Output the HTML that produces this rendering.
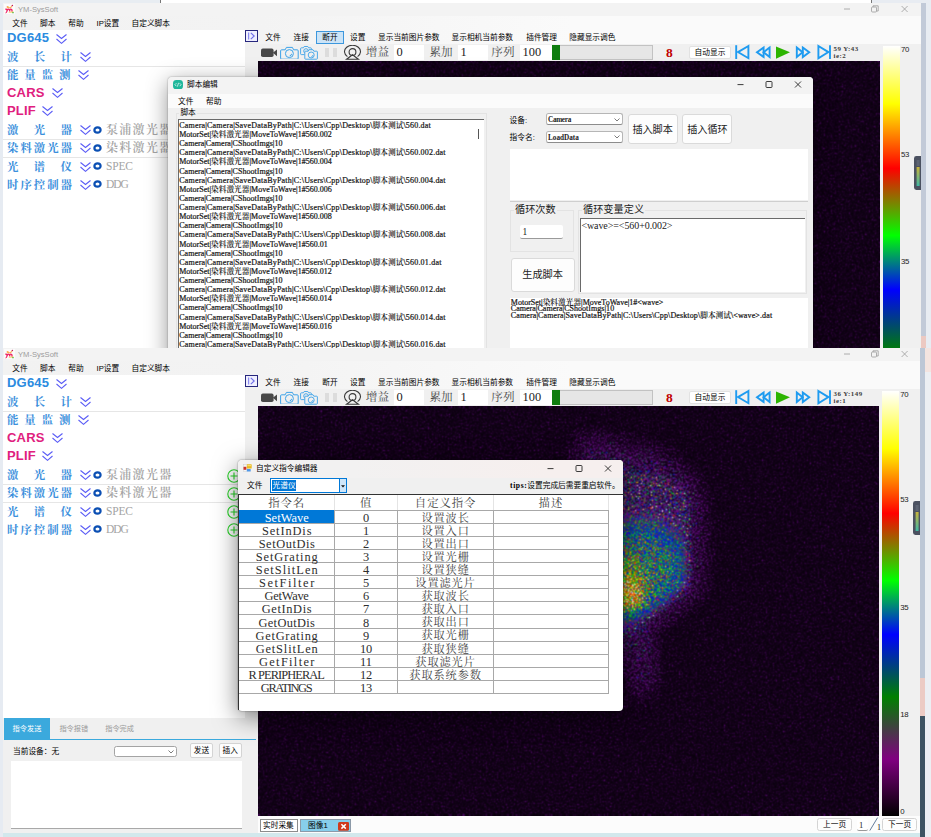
<!DOCTYPE html><html lang="zh"><head><meta charset="utf-8"><title>YM-SysSoft</title><style>
*{box-sizing:border-box;margin:0;padding:0}
html,body{width:931px;height:837px;overflow:hidden;background:#fff}
body{position:relative;font-family:"Liberation Sans","Noto Sans CJK SC",sans-serif;font-size:7.7px;color:#000;line-height:1}
.a{position:absolute}
.t{position:absolute;white-space:nowrap;line-height:10px;height:10px}
.ss{font-family:"Liberation Serif","Noto Serif CJK SC",serif}
.mono{font-family:"Liberation Serif","Noto Serif CJK SC",serif}
.win{position:absolute;left:0;top:0;width:931px;overflow:hidden}
.lbl{position:absolute;left:7px;height:12px;line-height:12px;font-size:12px;font-weight:700;white-space:nowrap}
.cj{font-family:"Liberation Serif","Noto Serif CJK SC",serif;color:#3b8fdc;width:65px;font-size:11.4px;font-weight:700;margin-top:.9px;text-align:justify;text-align-last:justify}
.en{font-family:"Liberation Sans",sans-serif;font-size:13px;letter-spacing:.2px}
.gray{position:absolute;left:106px;height:12px;line-height:12px;font-size:12px;color:#a4a4a4;font-weight:600;white-space:nowrap;font-family:"Liberation Serif","Noto Serif CJK SC",serif}
.sep{position:absolute;left:3px;width:242px;height:1px;background:#e6e6e6}
.btn{position:absolute;background:#fdfdfd;border:1px solid #d4d4d4;border-radius:2px;text-align:center;white-space:nowrap}
.inp{position:absolute;background:#fff}
.cb{position:absolute;background:#fff;border:1px solid #b6b6b6;border-bottom-color:#8c8c8c;border-radius:2.5px}

.scr,.scr2{font-size:8px;color:#161616;white-space:nowrap;font-weight:400;-webkit-text-stroke:.22px #161616}
.scr div{height:9.125px;line-height:9.125px}
.scr2 div{height:6.8px;line-height:6.8px}
.scr i,.scr2 i{line-height:0;font-style:normal;letter-spacing:0;font-weight:600;font-size:7.7px;-webkit-text-stroke:0;font-family:"Liberation Serif","Noto Serif CJK SC",serif}
.l1{letter-spacing:.2px}.l2{letter-spacing:0}.l3{letter-spacing:.03px}
.th{font-size:11.4px;height:13px;line-height:13px;text-align:center;color:#444;letter-spacing:.9px}
.td{font-size:12.4px;height:12.4px;line-height:12.4px;text-align:center;color:#2e2e2e}
.td2{font-size:11.2px;height:12.4px;line-height:12.4px;text-align:center;color:#444;letter-spacing:.9px}
</style></head><body>
<svg width="0" height="0" style="position:absolute"><defs>
<filter id="cm11" x="0" y="0" width="100%" height="100%" color-interpolation-filters="sRGB">
<feTurbulence type="fractalNoise" baseFrequency="0.71 0.63" numOctaves="3" seed="11" result="t"/>
<feColorMatrix in="t" type="matrix" values="1.3 0 0 0 -0.15  1.3 0 0 0 -0.15  1.3 0 0 0 -0.15  0 0 0 0 1" result="n"/>
<feComposite in="n" in2="n" operator="arithmetic" k1="1" k2="0" k3="0" k4="0" result="n2"/>
<feComposite in="n2" in2="n2" operator="arithmetic" k1="1" k2="0" k3="0" k4="0" result="n4"/>
<feComponentTransfer in="SourceGraphic" result="B"><feFuncR type="table" tableValues="0 0 0 0 0 0 0 0 0 0 0 0 0 0 0 0.008 0.021 0.034 0.048 0.061 0.076 0.09 0.105 0.12 0.135 0.151 0.166 0.182 0.198 0.214 0.23 0.247 0.263 0.28 0.297 0.314 0.331 0.348 0.365 0.383 0.4"/><feFuncG type="table" tableValues="0 0 0 0 0 0 0 0 0 0 0 0 0 0 0 0.008 0.021 0.034 0.048 0.061 0.076 0.09 0.105 0.12 0.135 0.151 0.166 0.182 0.198 0.214 0.23 0.247 0.263 0.28 0.297 0.314 0.331 0.348 0.365 0.383 0.4"/><feFuncB type="table" tableValues="0 0 0 0 0 0 0 0 0 0 0 0 0 0 0 0.008 0.021 0.034 0.048 0.061 0.076 0.09 0.105 0.12 0.135 0.151 0.166 0.182 0.198 0.214 0.23 0.247 0.263 0.28 0.297 0.314 0.331 0.348 0.365 0.383 0.4"/></feComponentTransfer>
<feComponentTransfer in="SourceGraphic" result="C"><feFuncR type="table" tableValues="0 0 0 0 0 0 0 0.007 0.047 0.12 0.219 0.336 0.46 0.577 0.674 0.734 0.759 0.782 0.805 0.827 0.849 0.869 0.89 0.91 0.93 0.949 0.967 0.986 1 1 1 1 1 1 1 1 1 1 1 1 1"/><feFuncG type="table" tableValues="0 0 0 0 0 0 0 0.007 0.047 0.12 0.219 0.336 0.46 0.577 0.674 0.734 0.759 0.782 0.805 0.827 0.849 0.869 0.89 0.91 0.93 0.949 0.967 0.986 1 1 1 1 1 1 1 1 1 1 1 1 1"/><feFuncB type="table" tableValues="0 0 0 0 0 0 0 0.007 0.047 0.12 0.219 0.336 0.46 0.577 0.674 0.734 0.759 0.782 0.805 0.827 0.849 0.869 0.89 0.91 0.93 0.949 0.967 0.986 1 1 1 1 1 1 1 1 1 1 1 1 1"/></feComponentTransfer>
<feComponentTransfer in="SourceGraphic" result="D"><feFuncR type="table" tableValues="0 0.081 0.162 0.243 0.323 0.388 0.388 0.383 0.354 0.306 0.246 0.181 0.117 0.061 0.02 0.001 0 0 0 0 0 0 0 0 0 0 0 0 0 0 0 0 0 0 0 0 0 0 0 0 0"/><feFuncG type="table" tableValues="0 0.081 0.162 0.243 0.323 0.388 0.388 0.383 0.354 0.306 0.246 0.181 0.117 0.061 0.02 0.001 0 0 0 0 0 0 0 0 0 0 0 0 0 0 0 0 0 0 0 0 0 0 0 0 0"/><feFuncB type="table" tableValues="0 0.081 0.162 0.243 0.323 0.388 0.388 0.383 0.354 0.306 0.246 0.181 0.117 0.061 0.02 0.001 0 0 0 0 0 0 0 0 0 0 0 0 0 0 0 0 0 0 0 0 0 0 0 0 0"/></feComponentTransfer>
<feComposite in="C" in2="n" operator="arithmetic" k1="1" k2="0" k3="0" k4="0" result="cn"/>
<feComposite in="D" in2="n4" operator="arithmetic" k1="4.6" k2="0" k3="0" k4="0" result="dn"/>
<feComposite in="cn" in2="B" operator="arithmetic" k1="0" k2="1" k3="1" k4="0" result="a0"/>
<feComposite in="a0" in2="dn" operator="arithmetic" k1="0" k2="1" k3="1" k4="0" result="a"/>
<feComposite in="a" in2="n4" operator="arithmetic" k1="0" k2="1" k3="0.13" k4="0.011" result="i"/>
<feComponentTransfer in="i" result="c">
<feFuncR type="table" tableValues="0 .46 .1 0 0 1 1 1"/>
<feFuncG type="table" tableValues="0 .04 .38 0 1 0 1 1"/>
<feFuncB type="table" tableValues="0 .6 .2 1 0 0 0 1"/>
</feComponentTransfer>
<feConvolveMatrix in="c" order="3" kernelMatrix="0.0484 0.1232 0.0484 0.1232 0.3136 0.1232 0.0484 0.1232 0.0484" divisor="1" edgeMode="duplicate" preserveAlpha="true"/>
</filter>
<filter id="cm4" x="0" y="0" width="100%" height="100%" color-interpolation-filters="sRGB">
<feTurbulence type="fractalNoise" baseFrequency="0.71 0.63" numOctaves="3" seed="4" result="t"/>
<feColorMatrix in="t" type="matrix" values="1.3 0 0 0 -0.15  1.3 0 0 0 -0.15  1.3 0 0 0 -0.15  0 0 0 0 1" result="n"/>
<feComposite in="n" in2="n" operator="arithmetic" k1="1" k2="0" k3="0" k4="0" result="n2"/>
<feComposite in="n2" in2="n2" operator="arithmetic" k1="1" k2="0" k3="0" k4="0" result="n4"/>
<feComponentTransfer in="SourceGraphic" result="B"><feFuncR type="table" tableValues="0 0 0 0 0 0 0 0 0 0 0 0 0 0 0 0.008 0.021 0.034 0.048 0.061 0.076 0.09 0.105 0.12 0.135 0.151 0.166 0.182 0.198 0.214 0.23 0.247 0.263 0.28 0.297 0.314 0.331 0.348 0.365 0.383 0.4"/><feFuncG type="table" tableValues="0 0 0 0 0 0 0 0 0 0 0 0 0 0 0 0.008 0.021 0.034 0.048 0.061 0.076 0.09 0.105 0.12 0.135 0.151 0.166 0.182 0.198 0.214 0.23 0.247 0.263 0.28 0.297 0.314 0.331 0.348 0.365 0.383 0.4"/><feFuncB type="table" tableValues="0 0 0 0 0 0 0 0 0 0 0 0 0 0 0 0.008 0.021 0.034 0.048 0.061 0.076 0.09 0.105 0.12 0.135 0.151 0.166 0.182 0.198 0.214 0.23 0.247 0.263 0.28 0.297 0.314 0.331 0.348 0.365 0.383 0.4"/></feComponentTransfer>
<feComponentTransfer in="SourceGraphic" result="C"><feFuncR type="table" tableValues="0 0 0 0 0 0 0 0.007 0.047 0.12 0.219 0.336 0.46 0.577 0.674 0.734 0.759 0.782 0.805 0.827 0.849 0.869 0.89 0.91 0.93 0.949 0.967 0.986 1 1 1 1 1 1 1 1 1 1 1 1 1"/><feFuncG type="table" tableValues="0 0 0 0 0 0 0 0.007 0.047 0.12 0.219 0.336 0.46 0.577 0.674 0.734 0.759 0.782 0.805 0.827 0.849 0.869 0.89 0.91 0.93 0.949 0.967 0.986 1 1 1 1 1 1 1 1 1 1 1 1 1"/><feFuncB type="table" tableValues="0 0 0 0 0 0 0 0.007 0.047 0.12 0.219 0.336 0.46 0.577 0.674 0.734 0.759 0.782 0.805 0.827 0.849 0.869 0.89 0.91 0.93 0.949 0.967 0.986 1 1 1 1 1 1 1 1 1 1 1 1 1"/></feComponentTransfer>
<feComponentTransfer in="SourceGraphic" result="D"><feFuncR type="table" tableValues="0 0.081 0.162 0.243 0.323 0.388 0.388 0.383 0.354 0.306 0.246 0.181 0.117 0.061 0.02 0.001 0 0 0 0 0 0 0 0 0 0 0 0 0 0 0 0 0 0 0 0 0 0 0 0 0"/><feFuncG type="table" tableValues="0 0.081 0.162 0.243 0.323 0.388 0.388 0.383 0.354 0.306 0.246 0.181 0.117 0.061 0.02 0.001 0 0 0 0 0 0 0 0 0 0 0 0 0 0 0 0 0 0 0 0 0 0 0 0 0"/><feFuncB type="table" tableValues="0 0.081 0.162 0.243 0.323 0.388 0.388 0.383 0.354 0.306 0.246 0.181 0.117 0.061 0.02 0.001 0 0 0 0 0 0 0 0 0 0 0 0 0 0 0 0 0 0 0 0 0 0 0 0 0"/></feComponentTransfer>
<feComposite in="C" in2="n" operator="arithmetic" k1="1" k2="0" k3="0" k4="0" result="cn"/>
<feComposite in="D" in2="n4" operator="arithmetic" k1="4.6" k2="0" k3="0" k4="0" result="dn"/>
<feComposite in="cn" in2="B" operator="arithmetic" k1="0" k2="1" k3="1" k4="0" result="a0"/>
<feComposite in="a0" in2="dn" operator="arithmetic" k1="0" k2="1" k3="1" k4="0" result="a"/>
<feComposite in="a" in2="n4" operator="arithmetic" k1="0" k2="1" k3="0.13" k4="0.011" result="i"/>
<feComponentTransfer in="i" result="c">
<feFuncR type="table" tableValues="0 .46 .1 0 0 1 1 1"/>
<feFuncG type="table" tableValues="0 .04 .38 0 1 0 1 1"/>
<feFuncB type="table" tableValues="0 .6 .2 1 0 0 0 1"/>
</feComponentTransfer>
<feConvolveMatrix in="c" order="3" kernelMatrix="0.0484 0.1232 0.0484 0.1232 0.3136 0.1232 0.0484 0.1232 0.0484" divisor="1" edgeMode="duplicate" preserveAlpha="true"/>
</filter>
<filter id="b12" x="-60%" y="-60%" width="220%" height="220%"><feGaussianBlur stdDeviation="11"/></filter>
<filter id="b7" x="-60%" y="-60%" width="220%" height="220%"><feGaussianBlur stdDeviation="7"/></filter>
<filter id="b5" x="-60%" y="-60%" width="220%" height="220%"><feGaussianBlur stdDeviation="4.5"/></filter>
<filter id="b3" x="-30%" y="-30%" width="160%" height="160%"><feGaussianBlur stdDeviation="3"/></filter>
</defs></svg>
<div class="a" style="left:0;top:0;width:931px;height:837px;background:#e8ecf2"></div>
<div class="a" style="left:0;top:0;width:160px;height:3px;background:#e8edf2"></div>
<div class="a" style="left:160px;top:0;width:712px;height:3px;background:#fff;border-left:1px solid #777;border-right:1px solid #777"></div>
<div class="win" style="top:0;height:348px">
<div class="a" style="left:921px;top:3px;width:5px;height:345px;background:#c2cad8"></div>
<div class="a" style="left:921px;top:336px;width:5px;height:12px;background:#ecc9c2"></div>
<div class="a" style="left:3px;top:3px;width:918px;height:345px;background:#f0f0f0"></div>
<div class="a" style="left:3px;top:3px;width:918px;height:13px;background:#f3f3f3"></div>
<div class="a" style="left:3px;top:16px;width:918px;height:28px;background:linear-gradient(to right,#f2f2f2 0,#f3f3f3 28%,#fafafa 62%)"></div>
<svg class="a" style="left:4px;top:4px" width="11" height="10.2" viewBox="0 0 11 10.2"><rect width="11" height="10.2" fill="#fbfbfb"/><path d="M2.6 2.4C3.6 1.6 4.4 2.4 5.2 3.2C6.2 3.6 7 2.6 7.6 1.6L8.2 2.4C7.6 3.6 7 4.2 6 4.2L3 4.2Z" fill="#f9a23c" opacity=".85"/><path d="M1 4.9C2 4.1 2.9 4.3 3.3 5C3.9 4.2 5 4.2 5.5 5C6.1 4.3 7.4 4.2 8.1 5.1C8.7 5.9 8.6 6.8 8.9 7.6L7.6 7.7C7.3 6.9 7.4 6 6.8 5.7C6.3 6 6.4 6.9 6.3 7.6L5.1 7.6C5.1 6.9 5.1 6.1 4.6 5.8C4 6.2 3.6 7.4 2.9 8.6C2.5 9.2 1.6 9.4 1.1 8.9C1.9 8.6 2.3 7.6 2.5 6.4C2.2 5.8 1.6 5.5 1 5.6Z" fill="#ee2466"/><circle cx="8.4" cy="1.5" r=".75" fill="#c2185b"/><path d="M4.6 7.9L9.4 7.5L9.6 8.4L4.8 8.6Z" fill="#f7c531"/><rect x="8" y="8.3" width="1.9" height=".9" fill="#4cb648"/></svg>
<div class="t" style="left:18px;top:5px;font-size:7.6px;color:#9c9c9c;font-family:'Liberation Sans',sans-serif">YM-SysSoft</div>
<div class="t" style="left:12.3px;top:18.6px">文件</div>
<div class="t" style="left:40.0px;top:18.6px">脚本</div>
<div class="t" style="left:68.3px;top:18.6px">帮助</div>
<div class="t" style="left:96.6px;top:18.6px">IP设置</div>
<div class="t" style="left:131.5px;top:18.6px">自定义脚本</div>
<svg class="a" style="left:843px;top:4px" width="70" height="10" viewBox="0 0 70 10"><g fill="none" stroke="#9a9a9a" stroke-width="0.8"><path d="M1 5H7"/><rect x="28.5" y="3" width="5" height="5" rx="1"/><path d="M30 3V1.8h5.2V7H33.6"/><path d="M58.6 2L64.6 8M64.6 2L58.6 8"/></g></svg>
<div class="a" style="left:3px;top:30px;width:242px;height:320px;background:#fff"></div>
<div class="lbl en" style="top:32.0px;color:#2b8be0;top:31.0px;height:14px;line-height:14px;">DG645</div>
<svg class="a" style="left:56px;top:33.8px" width="11" height="10" viewBox="0 0 11 10"><path d="M0.5 0.5 L5.5 4.5 L10.5 0.5 M0.5 5 L5.5 9.3 L10.5 5" fill="none" stroke="#5a5cf6" stroke-width="1.1"/></svg>
<div class="lbl cj" style="top:50.0px;">波长计</div>
<svg class="a" style="left:80px;top:51.8px" width="11" height="10" viewBox="0 0 11 10"><path d="M0.5 0.5 L5.5 4.5 L10.5 0.5 M0.5 5 L5.5 9.3 L10.5 5" fill="none" stroke="#5a5cf6" stroke-width="1.1"/></svg>
<div class="lbl cj" style="top:68.5px;width:63.4px;">能量监测</div>
<svg class="a" style="left:78px;top:70.3px" width="11" height="10" viewBox="0 0 11 10"><path d="M0.5 0.5 L5.5 4.5 L10.5 0.5 M0.5 5 L5.5 9.3 L10.5 5" fill="none" stroke="#5a5cf6" stroke-width="1.1"/></svg>
<div class="lbl en" style="top:86.5px;color:#e0207e;top:85.5px;height:14px;line-height:14px;">CARS</div>
<svg class="a" style="left:51.5px;top:88.3px" width="11" height="10" viewBox="0 0 11 10"><path d="M0.5 0.5 L5.5 4.5 L10.5 0.5 M0.5 5 L5.5 9.3 L10.5 5" fill="none" stroke="#5a5cf6" stroke-width="1.1"/></svg>
<div class="lbl en" style="top:104.5px;color:#e0207e;top:103.5px;height:14px;line-height:14px;">PLIF</div>
<svg class="a" style="left:42px;top:106.3px" width="11" height="10" viewBox="0 0 11 10"><path d="M0.5 0.5 L5.5 4.5 L10.5 0.5 M0.5 5 L5.5 9.3 L10.5 5" fill="none" stroke="#5a5cf6" stroke-width="1.1"/></svg>
<div class="lbl cj" style="top:123.5px;">激光器</div>
<svg class="a" style="left:80px;top:125.3px" width="11" height="10" viewBox="0 0 11 10"><path d="M0.5 0.5 L5.5 4.5 L10.5 0.5 M0.5 5 L5.5 9.3 L10.5 5" fill="none" stroke="#5a5cf6" stroke-width="1.1"/></svg>
<svg class="a" style="left:92.5px;top:125.5px" width="9" height="8" viewBox="0 0 9 8"><ellipse cx="4.5" cy="4" rx="3.1" ry="2.7" fill="#fff" stroke="#0b4fb3" stroke-width="2.2"/></svg>
<div class="gray" style="top:123.5px;letter-spacing:1.3px;">泵浦激光器</div>
<div class="lbl cj" style="top:141.5px;">染料激光器</div>
<svg class="a" style="left:80px;top:143.3px" width="11" height="10" viewBox="0 0 11 10"><path d="M0.5 0.5 L5.5 4.5 L10.5 0.5 M0.5 5 L5.5 9.3 L10.5 5" fill="none" stroke="#5a5cf6" stroke-width="1.1"/></svg>
<svg class="a" style="left:92.5px;top:143.5px" width="9" height="8" viewBox="0 0 9 8"><ellipse cx="4.5" cy="4" rx="3.1" ry="2.7" fill="#fff" stroke="#0b4fb3" stroke-width="2.2"/></svg>
<div class="gray" style="top:141.5px;letter-spacing:1.3px;">染料激光器</div>
<div class="lbl cj" style="top:160.0px;">光谱仪</div>
<svg class="a" style="left:80px;top:161.8px" width="11" height="10" viewBox="0 0 11 10"><path d="M0.5 0.5 L5.5 4.5 L10.5 0.5 M0.5 5 L5.5 9.3 L10.5 5" fill="none" stroke="#5a5cf6" stroke-width="1.1"/></svg>
<svg class="a" style="left:92.5px;top:162.0px" width="9" height="8" viewBox="0 0 9 8"><ellipse cx="4.5" cy="4" rx="3.1" ry="2.7" fill="#fff" stroke="#0b4fb3" stroke-width="2.2"/></svg>
<div class="gray" style="top:160.0px;font-size:11.5px;letter-spacing:-.2px;font-weight:400;">SPEC</div>
<div class="lbl cj" style="top:178.0px;">时序控制器</div>
<svg class="a" style="left:80px;top:179.8px" width="11" height="10" viewBox="0 0 11 10"><path d="M0.5 0.5 L5.5 4.5 L10.5 0.5 M0.5 5 L5.5 9.3 L10.5 5" fill="none" stroke="#5a5cf6" stroke-width="1.1"/></svg>
<svg class="a" style="left:92.5px;top:180.0px" width="9" height="8" viewBox="0 0 9 8"><ellipse cx="4.5" cy="4" rx="3.1" ry="2.7" fill="#fff" stroke="#0b4fb3" stroke-width="2.2"/></svg>
<div class="gray" style="top:178.0px;font-size:11.5px;letter-spacing:-1px;font-weight:400;">DDG</div>
<div class="sep" style="top:66px"></div>
<div class="sep" style="top:139px"></div>
<div class="sep" style="top:157px"></div>
<div class="a" style="left:245px;top:44px;width:676px;height:17px;background:#f0f0f0"></div>
<div class="a" style="left:245px;top:30px;width:13px;height:800px;background:#f0f0f0"></div>
<svg class="a" style="left:245px;top:30px" width="13" height="12" viewBox="0 0 13 12"><rect x="0.5" y="0.5" width="12" height="11" fill="#efefff" stroke="#27277e" stroke-width="1"/><path d="M3.6 2.6V9.4" stroke="#8c8cf0" stroke-width="1.2" fill="none"/><path d="M5.8 2.8L9.2 6L5.8 9.2" stroke="#6c6ce8" stroke-width="1.1" fill="none"/></svg>
<div class="a" style="left:316.3px;top:30.6px;width:27.6px;height:13px;background:#cce4f7;border:1px solid #3c97dd"></div>
<div class="t" style="left:265.3px;top:32.5px">文件</div>
<div class="t" style="left:293.6px;top:32.5px">连接</div>
<div class="t" style="left:322.3px;top:32.5px">断开</div>
<div class="t" style="left:350.0px;top:32.5px">设置</div>
<div class="t" style="left:378.0px;top:32.5px">显示当前图片参数</div>
<div class="t" style="left:451.5px;top:32.5px">显示相机当前参数</div>
<div class="t" style="left:526.2px;top:32.5px">插件管理</div>
<div class="t" style="left:569.3px;top:32.5px">隐藏显示调色</div>
<svg class="a" style="left:260px;top:47px" width="18" height="12" viewBox="0 0 18 12"><rect x="1" y="1.6" width="12.6" height="8.4" rx="1.8" fill="#484848"/><path d="M12.8 5.8L17 2.6V9.2Z" fill="#484848"/></svg>
<svg class="a" style="left:279.6px;top:45.7px" width="19.4" height="13.6" viewBox="0 0 19.4 13.6"><g fill="none" stroke="#3ba2e8" stroke-width="1"><path d="M1 3.6h3.6l1.2-2.4h6l1.2 2.4h3.6a1 1 0 0 1 1 1v7.4a1 1 0 0 1-1 1H1a1 1 0 0 1-1-1V4.6a1 1 0 0 1 1-1z" transform="translate(0.6 0.2)"/><circle cx="9.4" cy="7.6" r="4"/><path d="M11.6 7.8a2.3 2.3 0 0 1-2 2.2"/></g></svg>
<svg class="a" style="left:300.2px;top:45.6px" width="19.4" height="14" viewBox="0 0 19.4 14"><g fill="none" stroke="#3ba2e8" stroke-width="0.9"><path d="M4.6 8.6H1.4a.8.8 0 0 1-.8-.8V2.6a.8.8 0 0 1 .8-.8h2l.8-1.3h3.6l.8 1.3h2a.8.8 0 0 1 .8.8v1"/><circle cx="6" cy="5" r="2.3"/><path d="M5.6 5.2h2.6l.8-1.5h4l.8 1.5h2.8a.8.8 0 0 1 .8.8v6.4a.8.8 0 0 1-.8.8H5.6a.8.8 0 0 1-.8-.8V6a.8.8 0 0 1 .8-.8z" fill="#f0f0f0"/><circle cx="11.2" cy="9" r="3"/><path d="M12.8 9.2a1.7 1.7 0 0 1-1.5 1.6"/></g></svg>
<div class="a" style="left:325px;top:47.9px;width:4.1px;height:9px;background:#dcdcdc"></div>
<div class="a" style="left:332.8px;top:47.9px;width:4.2px;height:9px;background:#dcdcdc"></div>
<svg class="a" style="left:343px;top:45.0px" width="19" height="15" viewBox="0 0 19 15"><g fill="none" stroke="#3a3a3a" stroke-width="1.1"><path d="M4.4 11.6A8 6.4 0 1 1 14.6 11.6"/><circle cx="9.5" cy="7" r="3.4"/><path d="M9.5 9.8L3.6 14.2H15.4Z" fill="#f0f0f0"/></g></svg>
<div class="t ss" style="left:365.8px;top:46.0px;font-size:11.6px;height:13px;line-height:13px;color:#4a4a4a">增益</div>
<div class="inp" style="left:394.0px;top:44.6px;width:30.4px;height:15.4px"></div>
<div class="t ss" style="left:396.6px;top:45.6px;font-size:12.4px;height:13px;line-height:13px;color:#222">0</div>
<div class="t ss" style="left:429.5px;top:46.0px;font-size:11.6px;height:13px;line-height:13px;color:#4a4a4a">累加</div>
<div class="inp" style="left:457.8px;top:44.6px;width:30.0px;height:15.4px"></div>
<div class="t ss" style="left:460.4px;top:45.6px;font-size:12.4px;height:13px;line-height:13px;color:#222">1</div>
<div class="t ss" style="left:491.3px;top:46.0px;font-size:11.6px;height:13px;line-height:13px;color:#4a4a4a">序列</div>
<div class="inp" style="left:520.0px;top:44.6px;width:32.0px;height:15.4px"></div>
<div class="t ss" style="left:522.6px;top:45.6px;font-size:12.4px;height:13px;line-height:13px;color:#222">100</div>
<div class="a" style="left:552px;top:44.9px;width:101.4px;height:15px;background:#e6e6e6;border:1px solid #c2c2c2"></div>
<div class="a" style="left:552.4px;top:45.2px;width:7.8px;height:14.4px;background:#0f7d0f"></div>
<div class="t ss" style="left:666px;top:45.8px;font-size:13.5px;height:14px;line-height:14px;color:#c00000;font-weight:700">8</div>
<div class="btn" style="left:688.6px;top:45.8px;width:42.8px;height:13.6px;line-height:12.4px;border-color:#e2e2e2;background:#fff">自动显示</div>
<svg class="a" style="left:734px;top:44px" width="100" height="18" viewBox="0 0 100 18"><g fill="none" stroke="#1e9bf0" stroke-width="1.9" stroke-linejoin="miter"><path d="M2.2 1.2V15"/><path d="M14.4 2L4 8.1L14.4 14.2Z"/><path d="M29.6 3.6L23 8.3L29.6 13Z"/><path d="M35.6 3.6L29.6 8.3L35.6 13Z"/><path d="M62.8 3.6L68.6 8.3L62.8 13Z"/><path d="M68.8 3.6L75.2 8.3L68.8 13Z"/><path d="M84.4 2L94.4 8.1L84.4 14.2Z"/><path d="M96 1.2V15"/></g><path d="M42 2.4L56 8.3L42 14.8Z" fill="#2cb400"/></svg>
<div class="t mono" style="left:833.6px;top:44.8px;font-size:6.9px;height:8px;line-height:8px;color:#3c3c3c;letter-spacing:.45px;font-weight:700">59 Y:43</div>
<div class="t mono" style="left:833.6px;top:51.8px;font-size:6.9px;height:8px;line-height:8px;color:#3c3c3c;letter-spacing:.45px;font-weight:700">ie:2</div>
<svg class="a" style="left:258.0px;top:61.0px" width="622.0" height="290.0" viewBox="0 0 622.0 290.0"><g filter="url(#cm4)"><rect width="100%" height="100%" fill="#000"/></g></svg>
<div class="a" style="left:882.6px;top:46px;width:17.2px;height:305px;overflow:hidden"><div style="width:100%;height:425px;background:linear-gradient(to bottom,#ffffff 0%,#ffff00 13.6%,#ff0000 28.8%,#00ff00 44.6%,#0000ff 57.3%,#008000 72%,#800080 86.6%,#000000 100%)"></div></div>
<div class="t" style="left:901.0px;top:44.5px;font-size:7.8px;font-family:'Liberation Sans',sans-serif;letter-spacing:-.3px;color:#222">70</div>
<div class="t" style="left:901.0px;top:150.0px;font-size:7.8px;font-family:'Liberation Sans',sans-serif;letter-spacing:-.3px;color:#222">53</div>
<div class="t" style="left:901.0px;top:257.0px;font-size:7.8px;font-family:'Liberation Sans',sans-serif;letter-spacing:-.3px;color:#222">35</div>
<svg class="a" style="left:914.4px;top:156px" width="7" height="34" viewBox="0 0 7 34"><defs><linearGradient id="wg1" x1="0" y1="0" x2="0" y2="1"><stop offset="0" stop-color="#c9b43a"/><stop offset="1" stop-color="#3fb7a4"/></linearGradient></defs><path d="M7 0H2.4A2.4 2.4 0 0 0 0 2.4V31.6A2.4 2.4 0 0 0 2.4 34H7Z" fill="#4b5160"/><rect x="2.6" y="11" width="3" height="19" fill="url(#wg1)"/><rect x="2.6" y="4" width="3" height="6" fill="#5d6473"/></svg>
<div class="a" style="left:168px;top:77px;width:645px;height:300px;background:#f0f0f0;border-radius:4px 4px 0 0;box-shadow:0 5px 22px rgba(0,0,0,.42),0 0 1.5px rgba(0,0,0,.5);overflow:hidden">
<div class="a" style="left:0;top:0;width:100%;height:17px;background:#f3f3f3"></div>
<div class="a" style="left:0;top:17px;width:100%;height:14px;background:#fbfbfb"></div>
</div>
<svg class="a" style="left:173px;top:80px" width="10" height="9.4" viewBox="0 0 10 9.4"><rect width="10" height="9.4" rx="3.4" fill="#1fb79b"/><path d="M3.4 3.2L1.9 4.7L3.4 6.2M6.6 3.2L8.1 4.7L6.6 6.2M5.6 2.8L4.4 6.6" fill="none" stroke="#fff" stroke-width="0.7"/></svg>
<div class="t" style="left:187px;top:80px">脚本编辑</div>
<svg class="a" style="left:737px;top:80px" width="66" height="9" viewBox="0 0 66 9"><g fill="none" stroke="#1a1a1a" stroke-width="0.85"><path d="M0.5 4.6H6.5"/><rect x="29" y="1.5" width="6" height="6" rx="0.8"/><path d="M58 1.5L64 7.5M64 1.5L58 7.5"/></g></svg>
<div class="t" style="left:178px;top:96.6px">文件</div>
<div class="t" style="left:206px;top:96.6px">帮助</div>
<div class="a" style="left:176px;top:113px;width:311px;height:240px;border:1px solid #e3e3e3"></div>
<div class="t" style="left:179.4px;top:108.4px;background:#f0f0f0;padding:0 1px">脚本</div>
<div class="a" style="left:178px;top:119px;width:306px;height:232px;background:#fff;border-top:1px solid #6a6a6a;border-left:1px solid #6a6a6a"></div>
<div class="a" style="left:477.6px;top:129px;width:1px;height:10.4px;background:#555"></div>
<div class="a mono scr" style="left:179.2px;top:120.9px;width:300px">
<div class="l1">Camera|Camera|SaveDataByPath|C:\Users\Cpp\Desktop\<i>脚本测试</i>\560.dat</div>
<div class="l2">MotorSet|<i>染料激光器</i>|MoveToWave|1#560.002</div>
<div class="l3">Camera|Camera|CShootImgs|10</div>
<div class="l1">Camera|Camera|SaveDataByPath|C:\Users\Cpp\Desktop\<i>脚本测试</i>\560.002.dat</div>
<div class="l2">MotorSet|<i>染料激光器</i>|MoveToWave|1#560.004</div>
<div class="l3">Camera|Camera|CShootImgs|10</div>
<div class="l1">Camera|Camera|SaveDataByPath|C:\Users\Cpp\Desktop\<i>脚本测试</i>\560.004.dat</div>
<div class="l2">MotorSet|<i>染料激光器</i>|MoveToWave|1#560.006</div>
<div class="l3">Camera|Camera|CShootImgs|10</div>
<div class="l1">Camera|Camera|SaveDataByPath|C:\Users\Cpp\Desktop\<i>脚本测试</i>\560.006.dat</div>
<div class="l2">MotorSet|<i>染料激光器</i>|MoveToWave|1#560.008</div>
<div class="l3">Camera|Camera|CShootImgs|10</div>
<div class="l1">Camera|Camera|SaveDataByPath|C:\Users\Cpp\Desktop\<i>脚本测试</i>\560.008.dat</div>
<div class="l2">MotorSet|<i>染料激光器</i>|MoveToWave|1#560.01</div>
<div class="l3">Camera|Camera|CShootImgs|10</div>
<div class="l1">Camera|Camera|SaveDataByPath|C:\Users\Cpp\Desktop\<i>脚本测试</i>\560.01.dat</div>
<div class="l2">MotorSet|<i>染料激光器</i>|MoveToWave|1#560.012</div>
<div class="l3">Camera|Camera|CShootImgs|10</div>
<div class="l1">Camera|Camera|SaveDataByPath|C:\Users\Cpp\Desktop\<i>脚本测试</i>\560.012.dat</div>
<div class="l2">MotorSet|<i>染料激光器</i>|MoveToWave|1#560.014</div>
<div class="l3">Camera|Camera|CShootImgs|10</div>
<div class="l1">Camera|Camera|SaveDataByPath|C:\Users\Cpp\Desktop\<i>脚本测试</i>\560.014.dat</div>
<div class="l2">MotorSet|<i>染料激光器</i>|MoveToWave|1#560.016</div>
<div class="l3">Camera|Camera|CShootImgs|10</div>
<div class="l1">Camera|Camera|SaveDataByPath|C:\Users\Cpp\Desktop\<i>脚本测试</i>\560.016.dat</div>
</div>
<div class="t" style="left:509.6px;top:115.6px">设备:</div>
<div class="t" style="left:509.6px;top:133px">指令名:</div>
<div class="cb" style="left:546px;top:113.4px;width:77px;height:11.6px"></div>
<div class="t mono" style="left:548px;top:115.3px;font-size:7.2px;letter-spacing:-.3px;font-weight:700;color:#222">Camera</div>
<svg class="a" style="left:614px;top:117.6px" width="6" height="4" viewBox="0 0 6 4"><path d="M0.5 0.5L3 3L5.5 0.5" fill="none" stroke="#444" stroke-width="0.7"/></svg>
<div class="cb" style="left:546px;top:131.2px;width:77px;height:11.6px"></div>
<div class="t mono" style="left:548px;top:133.1px;font-size:7.2px;letter-spacing:0;font-weight:700;color:#222">LoadData</div>
<svg class="a" style="left:614px;top:135.4px" width="6" height="4" viewBox="0 0 6 4"><path d="M0.5 0.5L3 3L5.5 0.5" fill="none" stroke="#444" stroke-width="0.7"/></svg>
<div class="btn" style="left:627.6px;top:113.6px;width:50px;height:30.6px;line-height:29px;font-size:10.1px;border-radius:3px;border-color:#dadada;color:#222">插入脚本</div>
<div class="btn" style="left:682.4px;top:113.6px;width:50px;height:30.6px;line-height:29px;font-size:10.1px;border-radius:3px;border-color:#dadada;color:#222">插入循环</div>
<div class="a" style="left:510px;top:149px;width:297.5px;height:51.4px;background:#fff"></div>
<div class="a" style="left:510px;top:201px;width:297.5px;height:1px;background:#cfcfcf"></div>
<div class="a" style="left:510px;top:210px;width:64px;height:42px;border:1px solid #e3e3e3"></div>
<div class="t" style="left:514px;top:204px;font-size:10.2px;height:12px;line-height:12px;background:#f0f0f0;padding:0 1px;color:#222">循环次数</div>
<div class="a" style="left:520px;top:224.8px;width:42.8px;height:14.6px;background:#fff;border-bottom:1px solid #9a9a9a;border-radius:2px"></div>
<div class="t mono" style="left:522.4px;top:226.6px;font-size:9.4px;color:#222">1</div>
<div class="a" style="left:577.6px;top:210px;width:229.6px;height:83.6px;border:1px solid #e3e3e3"></div>
<div class="t" style="left:582px;top:204px;font-size:10.2px;height:12px;line-height:12px;background:#f0f0f0;padding:0 1px;color:#222">循环变量定义</div>
<div class="a" style="left:579.6px;top:218.4px;width:225.4px;height:73.2px;background:#fff;border-top:1px solid #6a6a6a;border-left:1px solid #6a6a6a"></div>
<div class="t mono" style="left:581.4px;top:220.6px;font-size:10px;letter-spacing:-.08px;color:#222">&lt;wave&gt;=&lt;560+0.002&gt;</div>
<div class="btn" style="left:510.6px;top:258px;width:64px;height:34px;line-height:32px;font-size:10.2px;border-radius:3px;border-color:#dadada;color:#222">生成脚本</div>
<div class="a" style="left:510px;top:298.4px;width:297.5px;height:60px;background:#fff"></div>
<div class="a mono scr2" style="left:510.8px;top:299.6px;width:296px">
<div class="l2">MotorSet|<i>染料激光器</i>|MoveToWave|1#&lt;wave&gt;</div>
<div class="l3">Camera|Camera|CShootImgs|10</div>
<div class="l1" style="letter-spacing:.12px">Camera|Camera|SaveDataByPath|C:\Users\Cpp\Desktop\<i>脚本测试</i>\&lt;wave&gt;.dat</div>
</div>
</div>
<div class="win" style="top:348px;height:489px"><div class="a" style="left:0;top:-348px;width:931px;height:837px">
<div class="a" style="left:920px;top:348px;width:5.4px;height:489px;background:#bcc7d6"></div>
<div class="a" style="left:924.8px;top:372px;width:1px;height:122px;background:#33495f"></div>
<div class="a" style="left:920px;top:678px;width:5.4px;height:38px;background:#eccbc4"></div>
<div class="a" style="left:920px;top:716px;width:5.4px;height:121px;background:#3d5362"></div>
<div class="a" style="left:925.4px;top:348px;width:5.6px;height:489px;background:#eceff3"></div>
<div class="a" style="left:925.4px;top:348px;width:5.6px;height:24px;background:#f3e4e0"></div>
<div class="a" style="left:3px;top:348px;width:917px;height:485px;background:#f0f0f0"></div>
<div class="a" style="left:0;top:833px;width:920px;height:4px;background:#d2e8ec"></div>
<div class="a" style="left:3px;top:348px;width:918px;height:13px;background:#f3f3f3"></div>
<div class="a" style="left:3px;top:361px;width:918px;height:28px;background:linear-gradient(to right,#f2f2f2 0,#f3f3f3 28%,#fafafa 62%)"></div>
<svg class="a" style="left:4px;top:349px" width="11" height="10.2" viewBox="0 0 11 10.2"><rect width="11" height="10.2" fill="#fbfbfb"/><path d="M2.6 2.4C3.6 1.6 4.4 2.4 5.2 3.2C6.2 3.6 7 2.6 7.6 1.6L8.2 2.4C7.6 3.6 7 4.2 6 4.2L3 4.2Z" fill="#f9a23c" opacity=".85"/><path d="M1 4.9C2 4.1 2.9 4.3 3.3 5C3.9 4.2 5 4.2 5.5 5C6.1 4.3 7.4 4.2 8.1 5.1C8.7 5.9 8.6 6.8 8.9 7.6L7.6 7.7C7.3 6.9 7.4 6 6.8 5.7C6.3 6 6.4 6.9 6.3 7.6L5.1 7.6C5.1 6.9 5.1 6.1 4.6 5.8C4 6.2 3.6 7.4 2.9 8.6C2.5 9.2 1.6 9.4 1.1 8.9C1.9 8.6 2.3 7.6 2.5 6.4C2.2 5.8 1.6 5.5 1 5.6Z" fill="#ee2466"/><circle cx="8.4" cy="1.5" r=".75" fill="#c2185b"/><path d="M4.6 7.9L9.4 7.5L9.6 8.4L4.8 8.6Z" fill="#f7c531"/><rect x="8" y="8.3" width="1.9" height=".9" fill="#4cb648"/></svg>
<div class="t" style="left:18px;top:350px;font-size:7.6px;color:#9c9c9c;font-family:'Liberation Sans',sans-serif">YM-SysSoft</div>
<div class="t" style="left:12.3px;top:363.6px">文件</div>
<div class="t" style="left:40.0px;top:363.6px">脚本</div>
<div class="t" style="left:68.3px;top:363.6px">帮助</div>
<div class="t" style="left:96.6px;top:363.6px">IP设置</div>
<div class="t" style="left:131.5px;top:363.6px">自定义脚本</div>
<svg class="a" style="left:843px;top:349px" width="70" height="10" viewBox="0 0 70 10"><g fill="none" stroke="#9a9a9a" stroke-width="0.8"><path d="M1 5H7"/><rect x="28.5" y="3" width="5" height="5" rx="1"/><path d="M30 3V1.8h5.2V7H33.6"/><path d="M58.6 2L64.6 8M64.6 2L58.6 8"/></g></svg>
<div class="a" style="left:920px;top:348px;width:2px;height:46px;background:#bcc7d6"></div>
<div class="a" style="left:3px;top:375px;width:242px;height:342.6px;background:#fff"></div>
<div class="lbl en" style="top:377.0px;color:#2b8be0;top:376.0px;height:14px;line-height:14px;">DG645</div>
<svg class="a" style="left:56px;top:378.8px" width="11" height="10" viewBox="0 0 11 10"><path d="M0.5 0.5 L5.5 4.5 L10.5 0.5 M0.5 5 L5.5 9.3 L10.5 5" fill="none" stroke="#5a5cf6" stroke-width="1.1"/></svg>
<div class="lbl cj" style="top:395.0px;">波长计</div>
<svg class="a" style="left:80px;top:396.8px" width="11" height="10" viewBox="0 0 11 10"><path d="M0.5 0.5 L5.5 4.5 L10.5 0.5 M0.5 5 L5.5 9.3 L10.5 5" fill="none" stroke="#5a5cf6" stroke-width="1.1"/></svg>
<div class="lbl cj" style="top:413.5px;width:63.4px;">能量监测</div>
<svg class="a" style="left:78px;top:415.3px" width="11" height="10" viewBox="0 0 11 10"><path d="M0.5 0.5 L5.5 4.5 L10.5 0.5 M0.5 5 L5.5 9.3 L10.5 5" fill="none" stroke="#5a5cf6" stroke-width="1.1"/></svg>
<div class="lbl en" style="top:431.5px;color:#e0207e;top:430.5px;height:14px;line-height:14px;">CARS</div>
<svg class="a" style="left:51.5px;top:433.3px" width="11" height="10" viewBox="0 0 11 10"><path d="M0.5 0.5 L5.5 4.5 L10.5 0.5 M0.5 5 L5.5 9.3 L10.5 5" fill="none" stroke="#5a5cf6" stroke-width="1.1"/></svg>
<div class="lbl en" style="top:449.5px;color:#e0207e;top:448.5px;height:14px;line-height:14px;">PLIF</div>
<svg class="a" style="left:42px;top:451.3px" width="11" height="10" viewBox="0 0 11 10"><path d="M0.5 0.5 L5.5 4.5 L10.5 0.5 M0.5 5 L5.5 9.3 L10.5 5" fill="none" stroke="#5a5cf6" stroke-width="1.1"/></svg>
<div class="lbl cj" style="top:468.5px;">激光器</div>
<svg class="a" style="left:80px;top:470.3px" width="11" height="10" viewBox="0 0 11 10"><path d="M0.5 0.5 L5.5 4.5 L10.5 0.5 M0.5 5 L5.5 9.3 L10.5 5" fill="none" stroke="#5a5cf6" stroke-width="1.1"/></svg>
<svg class="a" style="left:92.5px;top:470.5px" width="9" height="8" viewBox="0 0 9 8"><ellipse cx="4.5" cy="4" rx="3.1" ry="2.7" fill="#fff" stroke="#0b4fb3" stroke-width="2.2"/></svg>
<div class="gray" style="top:468.5px;letter-spacing:1.3px;">泵浦激光器</div>
<svg class="a" style="left:227px;top:468.5px" width="14" height="14" viewBox="0 0 14 14"><circle cx="7" cy="7" r="6.2" fill="#fff" stroke="#27d427" stroke-width="1.1"/><path d="M3.5 7H10.5M7 3.5V10.5" stroke="#27d427" stroke-width="1.1"/></svg>
<div class="lbl cj" style="top:486.5px;">染料激光器</div>
<svg class="a" style="left:80px;top:488.3px" width="11" height="10" viewBox="0 0 11 10"><path d="M0.5 0.5 L5.5 4.5 L10.5 0.5 M0.5 5 L5.5 9.3 L10.5 5" fill="none" stroke="#5a5cf6" stroke-width="1.1"/></svg>
<svg class="a" style="left:92.5px;top:488.5px" width="9" height="8" viewBox="0 0 9 8"><ellipse cx="4.5" cy="4" rx="3.1" ry="2.7" fill="#fff" stroke="#0b4fb3" stroke-width="2.2"/></svg>
<div class="gray" style="top:486.5px;letter-spacing:1.3px;">染料激光器</div>
<svg class="a" style="left:227px;top:486.5px" width="14" height="14" viewBox="0 0 14 14"><circle cx="7" cy="7" r="6.2" fill="#fff" stroke="#27d427" stroke-width="1.1"/><path d="M3.5 7H10.5M7 3.5V10.5" stroke="#27d427" stroke-width="1.1"/></svg>
<div class="lbl cj" style="top:505.0px;">光谱仪</div>
<svg class="a" style="left:80px;top:506.8px" width="11" height="10" viewBox="0 0 11 10"><path d="M0.5 0.5 L5.5 4.5 L10.5 0.5 M0.5 5 L5.5 9.3 L10.5 5" fill="none" stroke="#5a5cf6" stroke-width="1.1"/></svg>
<svg class="a" style="left:92.5px;top:507.0px" width="9" height="8" viewBox="0 0 9 8"><ellipse cx="4.5" cy="4" rx="3.1" ry="2.7" fill="#fff" stroke="#0b4fb3" stroke-width="2.2"/></svg>
<div class="gray" style="top:505.0px;font-size:11.5px;letter-spacing:-.2px;font-weight:400;">SPEC</div>
<svg class="a" style="left:227px;top:505.0px" width="14" height="14" viewBox="0 0 14 14"><circle cx="7" cy="7" r="6.2" fill="#fff" stroke="#27d427" stroke-width="1.1"/><path d="M3.5 7H10.5M7 3.5V10.5" stroke="#27d427" stroke-width="1.1"/></svg>
<div class="lbl cj" style="top:523.0px;">时序控制器</div>
<svg class="a" style="left:80px;top:524.8px" width="11" height="10" viewBox="0 0 11 10"><path d="M0.5 0.5 L5.5 4.5 L10.5 0.5 M0.5 5 L5.5 9.3 L10.5 5" fill="none" stroke="#5a5cf6" stroke-width="1.1"/></svg>
<svg class="a" style="left:92.5px;top:525.0px" width="9" height="8" viewBox="0 0 9 8"><ellipse cx="4.5" cy="4" rx="3.1" ry="2.7" fill="#fff" stroke="#0b4fb3" stroke-width="2.2"/></svg>
<div class="gray" style="top:523.0px;font-size:11.5px;letter-spacing:-1px;font-weight:400;">DDG</div>
<svg class="a" style="left:227px;top:523.0px" width="14" height="14" viewBox="0 0 14 14"><circle cx="7" cy="7" r="6.2" fill="#fff" stroke="#27d427" stroke-width="1.1"/><path d="M3.5 7H10.5M7 3.5V10.5" stroke="#27d427" stroke-width="1.1"/></svg>
<div class="sep" style="top:411px"></div>
<div class="sep" style="top:484px"></div>
<div class="sep" style="top:502px"></div>
<div class="a" style="left:245px;top:389px;width:675px;height:17px;background:#f0f0f0"></div>
<div class="a" style="left:245px;top:375px;width:13px;height:458px;background:#f0f0f0"></div>
<svg class="a" style="left:245px;top:375px" width="13" height="12" viewBox="0 0 13 12"><rect x="0.5" y="0.5" width="12" height="11" fill="#efefff" stroke="#27277e" stroke-width="1"/><path d="M3.6 2.6V9.4" stroke="#8c8cf0" stroke-width="1.2" fill="none"/><path d="M5.8 2.8L9.2 6L5.8 9.2" stroke="#6c6ce8" stroke-width="1.1" fill="none"/></svg>
<div class="t" style="left:265.3px;top:377.5px">文件</div>
<div class="t" style="left:293.6px;top:377.5px">连接</div>
<div class="t" style="left:322.3px;top:377.5px">断开</div>
<div class="t" style="left:350.0px;top:377.5px">设置</div>
<div class="t" style="left:378.0px;top:377.5px">显示当前图片参数</div>
<div class="t" style="left:451.5px;top:377.5px">显示相机当前参数</div>
<div class="t" style="left:526.2px;top:377.5px">插件管理</div>
<div class="t" style="left:569.3px;top:377.5px">隐藏显示调色</div>
<svg class="a" style="left:260px;top:392px" width="18" height="12" viewBox="0 0 18 12"><rect x="1" y="1.6" width="12.6" height="8.4" rx="1.8" fill="#484848"/><path d="M12.8 5.8L17 2.6V9.2Z" fill="#484848"/></svg>
<svg class="a" style="left:279.6px;top:390.7px" width="19.4" height="13.6" viewBox="0 0 19.4 13.6"><g fill="none" stroke="#3ba2e8" stroke-width="1"><path d="M1 3.6h3.6l1.2-2.4h6l1.2 2.4h3.6a1 1 0 0 1 1 1v7.4a1 1 0 0 1-1 1H1a1 1 0 0 1-1-1V4.6a1 1 0 0 1 1-1z" transform="translate(0.6 0.2)"/><circle cx="9.4" cy="7.6" r="4"/><path d="M11.6 7.8a2.3 2.3 0 0 1-2 2.2"/></g></svg>
<svg class="a" style="left:300.2px;top:390.6px" width="19.4" height="14" viewBox="0 0 19.4 14"><g fill="none" stroke="#3ba2e8" stroke-width="0.9"><path d="M4.6 8.6H1.4a.8.8 0 0 1-.8-.8V2.6a.8.8 0 0 1 .8-.8h2l.8-1.3h3.6l.8 1.3h2a.8.8 0 0 1 .8.8v1"/><circle cx="6" cy="5" r="2.3"/><path d="M5.6 5.2h2.6l.8-1.5h4l.8 1.5h2.8a.8.8 0 0 1 .8.8v6.4a.8.8 0 0 1-.8.8H5.6a.8.8 0 0 1-.8-.8V6a.8.8 0 0 1 .8-.8z" fill="#f0f0f0"/><circle cx="11.2" cy="9" r="3"/><path d="M12.8 9.2a1.7 1.7 0 0 1-1.5 1.6"/></g></svg>
<div class="a" style="left:325px;top:392.9px;width:4.1px;height:9px;background:#dcdcdc"></div>
<div class="a" style="left:332.8px;top:392.9px;width:4.2px;height:9px;background:#dcdcdc"></div>
<svg class="a" style="left:343px;top:390.0px" width="19" height="15" viewBox="0 0 19 15"><g fill="none" stroke="#3a3a3a" stroke-width="1.1"><path d="M4.4 11.6A8 6.4 0 1 1 14.6 11.6"/><circle cx="9.5" cy="7" r="3.4"/><path d="M9.5 9.8L3.6 14.2H15.4Z" fill="#f0f0f0"/></g></svg>
<div class="t ss" style="left:365.8px;top:391.0px;font-size:11.6px;height:13px;line-height:13px;color:#4a4a4a">增益</div>
<div class="inp" style="left:394.0px;top:389.6px;width:30.4px;height:15.4px"></div>
<div class="t ss" style="left:396.6px;top:390.6px;font-size:12.4px;height:13px;line-height:13px;color:#222">0</div>
<div class="t ss" style="left:429.5px;top:391.0px;font-size:11.6px;height:13px;line-height:13px;color:#4a4a4a">累加</div>
<div class="inp" style="left:457.8px;top:389.6px;width:30.0px;height:15.4px"></div>
<div class="t ss" style="left:460.4px;top:390.6px;font-size:12.4px;height:13px;line-height:13px;color:#222">1</div>
<div class="t ss" style="left:491.3px;top:391.0px;font-size:11.6px;height:13px;line-height:13px;color:#4a4a4a">序列</div>
<div class="inp" style="left:520.0px;top:389.6px;width:32.0px;height:15.4px"></div>
<div class="t ss" style="left:522.6px;top:390.6px;font-size:12.4px;height:13px;line-height:13px;color:#222">100</div>
<div class="a" style="left:552px;top:389.9px;width:101.4px;height:15px;background:#e6e6e6;border:1px solid #c2c2c2"></div>
<div class="a" style="left:552.4px;top:390.2px;width:7.8px;height:14.4px;background:#0f7d0f"></div>
<div class="t ss" style="left:666px;top:390.8px;font-size:13.5px;height:14px;line-height:14px;color:#c00000;font-weight:700">8</div>
<div class="btn" style="left:688.6px;top:390.8px;width:42.8px;height:13.6px;line-height:12.4px;border-color:#e2e2e2;background:#fff">自动显示</div>
<svg class="a" style="left:734px;top:389px" width="100" height="18" viewBox="0 0 100 18"><g fill="none" stroke="#1e9bf0" stroke-width="1.9" stroke-linejoin="miter"><path d="M2.2 1.2V15"/><path d="M14.4 2L4 8.1L14.4 14.2Z"/><path d="M29.6 3.6L23 8.3L29.6 13Z"/><path d="M35.6 3.6L29.6 8.3L35.6 13Z"/><path d="M62.8 3.6L68.6 8.3L62.8 13Z"/><path d="M68.8 3.6L75.2 8.3L68.8 13Z"/><path d="M84.4 2L94.4 8.1L84.4 14.2Z"/><path d="M96 1.2V15"/></g><path d="M42 2.4L56 8.3L42 14.8Z" fill="#2cb400"/></svg>
<div class="t mono" style="left:833.6px;top:389.8px;font-size:6.9px;height:8px;line-height:8px;color:#3c3c3c;letter-spacing:.45px;font-weight:700">36 Y:149</div>
<div class="t mono" style="left:833.6px;top:396.8px;font-size:6.9px;height:8px;line-height:8px;color:#3c3c3c;letter-spacing:.45px;font-weight:700">ie:1</div>
<svg class="a" style="left:258.0px;top:406.0px" width="621.4" height="410.0" viewBox="0 0 621.4 410.0"><g filter="url(#cm11)"><rect width="100%" height="100%" fill="#000"/><clipPath id="cpn"><path d="M330 60L402 71L422 83L429 93L429 179L412 194L392 209L372 222L330 242Z"/></clipPath>
<linearGradient id="lgp" x1="0" y1="0" x2="0" y2="1"><stop offset="0" stop-color="#fff" stop-opacity="0.1"/><stop offset="0.5" stop-color="#fff" stop-opacity="0.17"/><stop offset="1" stop-color="#fff" stop-opacity="0.17"/></linearGradient>
<g fill="#fff">
<path d="M322 30L402 50L434 74L442 92L442 184L406 212L372 240L322 256Z" opacity="0.05" filter="url(#b12)"/>
<ellipse cx="383" cy="256" rx="10" ry="36" opacity="0.06" filter="url(#b12)"/>
<g filter="url(#b3)"><g clip-path="url(#cpn)">
<rect x="320" y="58" width="120" height="190" fill="url(#lgp)"/>
<ellipse cx="380" cy="162" rx="50" ry="46" opacity="0.33" filter="url(#b12)"/>
<ellipse cx="371" cy="180" rx="20" ry="32" opacity="0.22" filter="url(#b7)"/>
<ellipse cx="372" cy="189" rx="11" ry="17" opacity="0.45" filter="url(#b5)"/>
</g></g>
</g></g></svg>
<div class="a" style="left:881.8px;top:391px;width:17.2px;height:425px;overflow:hidden"><div style="width:100%;height:425px;background:linear-gradient(to bottom,#ffffff 0%,#ffff00 13.6%,#ff0000 28.8%,#00ff00 44.6%,#0000ff 57.3%,#008000 72%,#800080 86.6%,#000000 100%)"></div></div>
<div class="t" style="left:900.2px;top:389.6px;font-size:7.8px;font-family:'Liberation Sans',sans-serif;letter-spacing:-.3px;color:#222">70</div>
<div class="t" style="left:900.2px;top:494.8px;font-size:7.8px;font-family:'Liberation Sans',sans-serif;letter-spacing:-.3px;color:#222">53</div>
<div class="t" style="left:900.2px;top:602.8px;font-size:7.8px;font-family:'Liberation Sans',sans-serif;letter-spacing:-.3px;color:#222">35</div>
<div class="t" style="left:900.2px;top:709.5px;font-size:7.8px;font-family:'Liberation Sans',sans-serif;letter-spacing:-.3px;color:#222">18</div>
<div class="t" style="left:900.2px;top:806.6px;font-size:7.8px;font-family:'Liberation Sans',sans-serif;letter-spacing:-.3px;color:#222">0</div>
<svg class="a" style="left:913.2px;top:501px" width="7" height="34" viewBox="0 0 7 34"><defs><linearGradient id="wg2" x1="0" y1="0" x2="0" y2="1"><stop offset="0" stop-color="#c9b43a"/><stop offset="1" stop-color="#3fb7a4"/></linearGradient></defs><path d="M7 0H2.4A2.4 2.4 0 0 0 0 2.4V31.6A2.4 2.4 0 0 0 2.4 34H7Z" fill="#4b5160"/><rect x="2.6" y="11" width="3" height="19" fill="url(#wg2)"/><rect x="2.6" y="4" width="3" height="6" fill="#5d6473"/></svg>
<div class="a" style="left:258px;top:816px;width:662px;height:17px;background:#fcfcfc"></div>
<div class="a" style="left:259.5px;top:818.6px;width:38.2px;height:13.6px;background:#fff;border:1px solid #8c8c8c"></div>
<div class="t" style="left:263px;top:821.4px">实时采集</div>
<div class="a" style="left:299.5px;top:818.6px;width:51px;height:13.6px;background:#87ceeb;border:1px solid #8c9aa8"></div>
<div class="t" style="left:308px;top:821.4px">图像1</div>
<svg class="a" style="left:337.6px;top:821.8px" width="11.2" height="8.8" viewBox="0 0 11.2 8.8"><rect width="11.2" height="8.8" rx="1.6" fill="#cf3a1c"/><path d="M3.4 2.2L7.8 6.6M7.8 2.2L3.4 6.6" stroke="#fff" stroke-width="1.5" fill="none"/></svg>
<div class="btn" style="left:817.4px;top:818.4px;width:34.4px;height:13px;line-height:11.4px;border-radius:2.5px">上一页</div>
<div class="a" style="left:856.7px;top:819px;width:11.4px;height:11.6px;background:#fff;border-bottom:1px solid #999;border-radius:2px"></div>
<div class="t mono" style="left:859px;top:819.6px;font-size:8.6px;color:#222">1</div>
<svg class="a" style="left:869px;top:817px" width="10" height="15" viewBox="0 0 10 15"><path d="M8.6 0.6L0.8 13.6" stroke="#3c5a80" stroke-width="0.8"/></svg>
<div class="t mono" style="left:877px;top:822.8px;font-size:8px;color:#222">1</div>
<div class="btn" style="left:882.3px;top:818.4px;width:34.6px;height:13px;line-height:11.4px;border-radius:2.5px">下一页</div>
<div class="a" style="left:4px;top:717.6px;width:46.4px;height:21.6px;background:#3ba9dd"></div>
<div class="a" style="left:4px;top:738.8px;width:252px;height:1.4px;background:#3ba9dd"></div>
<div class="t" style="left:12.6px;top:723.6px;color:#fff;font-size:7.2px">指令发送</div>
<div class="t" style="left:59.4px;top:723.6px;color:#9a9a9a;font-size:7.2px">指令报错</div>
<div class="t" style="left:105.2px;top:723.6px;color:#9a9a9a;font-size:7.2px">指令完成</div>
<div class="t" style="left:13px;top:747.2px">当前设备：无</div>
<div class="cb" style="left:114px;top:746px;width:62.6px;height:10.8px;border-color:#a4a4a4"></div>
<svg class="a" style="left:168px;top:750px" width="6" height="4" viewBox="0 0 6 4"><path d="M0.5 0.5L3 3L5.5 0.5" fill="none" stroke="#444" stroke-width="0.7"/></svg>
<div class="btn" style="left:189.8px;top:743.2px;width:23.2px;height:15px;line-height:14.6px">发送</div>
<div class="btn" style="left:218.5px;top:743.2px;width:23.6px;height:15px;line-height:14.6px">插入</div>
<div class="a" style="left:11.2px;top:761px;width:230.8px;height:68px;background:#fff;border-bottom:1px solid #a8a8a8"></div>
<div class="a" style="left:238.0px;top:460.4px;width:384.7px;height:250.4px;background:#fff;border-radius:4px;box-shadow:0 6px 24px rgba(0,0,0,.5),0 0 1.5px rgba(0,0,0,.6);overflow:hidden">
<div class="a" style="left:0;top:0;width:100%;height:17.6px;background:linear-gradient(to right,#f2f1f1 30%,#f6efee 80%)"></div>
<div class="a" style="left:0;top:17.6px;width:100%;height:16px;background:#f0f0f0"></div>
</div>
<svg class="a" style="left:243.4px;top:464px" width="9.2" height="8.2" viewBox="0 0 9.2 8.2"><rect x="0.4" y="0.8" width="4.2" height="6.8" fill="#f4f4f4" stroke="#c8c8c8" stroke-width="0.4"/><rect x="0.5" y="2.8" width="2.9" height="3" fill="#c8332b"/><rect x="3.8" y="0.3" width="4.9" height="4.2" rx=".5" fill="#e8b820"/><rect x="4.4" y="1" width="3.6" height="1.2" fill="#f7dc6a"/><rect x="3.8" y="4.9" width="3.9" height="2.7" rx=".4" fill="#4f97e8"/></svg>
<div class="t" style="left:256px;top:464.3px">自定义指令编辑器</div>
<svg class="a" style="left:546.6px;top:464px" width="66" height="9" viewBox="0 0 66 9"><g fill="none" stroke="#1a1a1a" stroke-width="0.85"><path d="M0.5 4.6H6.5"/><rect x="29" y="1.5" width="6" height="6" rx="0.8"/><path d="M58 1.5L64 7.5M64 1.5L58 7.5"/></g></svg>
<div class="t" style="left:247px;top:481.2px">文件</div>
<div class="a" style="left:270px;top:478.3px;width:77px;height:14.8px;background:#fff;border:1px solid #0078d7"></div>
<div class="a" style="left:272px;top:480.2px;width:24.4px;height:11px;background:#0078d7"></div>
<div class="t" style="left:272.6px;top:480.8px;color:#fff">光谱仪</div>
<div class="a" style="left:338.8px;top:479.3px;width:7.4px;height:12.8px;background:#cfe6f9;border-left:1px solid #0078d7"></div>
<svg class="a" style="left:341px;top:485.4px" width="4" height="3" viewBox="0 0 4 3"><path d="M0 0.3H4L2 2.6Z" fill="#111"/></svg>
<div class="t" style="left:510px;top:481px"><span class="mono" style="font-size:7.6px;letter-spacing:.6px;font-weight:700">tips:</span>设置完成后需要重启软件。</div>
<div class="a" style="left:238px;top:493.6px;width:384.7px;height:1.4px;background:#333"></div>
<div class="a" style="left:238px;top:494px;width:1.2px;height:216px;background:#333"></div>
<div class="t ss th" style="left:239.0px;top:497.1px;width:95.4px">指令名</div>
<div class="t ss th" style="left:334.4px;top:497.1px;width:63.4px">值</div>
<div class="t ss th" style="left:397.8px;top:497.1px;width:95.6px">自定义指令</div>
<div class="t ss th" style="left:493.4px;top:497.1px;width:115.0px">描述</div>
<div class="a" style="left:333.9px;top:495px;width:1px;height:15.4px;background:#e4e4e4"></div>
<div class="a" style="left:397.3px;top:495px;width:1px;height:15.4px;background:#e4e4e4"></div>
<div class="a" style="left:492.9px;top:495px;width:1px;height:15.4px;background:#e4e4e4"></div>
<div class="a" style="left:607.9px;top:495px;width:1px;height:15.4px;background:#e4e4e4"></div>
<div class="a" style="left:239px;top:509.9px;width:369.4px;height:1.0px;border-top:1px solid #a8a8a8"></div>
<div class="a" style="left:239.2px;top:510.4px;width:95.2px;height:13.1px;background:#0078d7"></div>
<div class="a" style="left:239px;top:522.97px;width:369.9px;height:1px;background:#a8a8a8"></div>
<div class="t mono td" style="left:239.0px;top:512.00px;width:95.4px;color:#fff;letter-spacing:0.05px;text-indent:0.05px">SetWave</div>
<div class="t mono td" style="left:334.4px;top:512.00px;width:63.4px">0</div>
<div class="t ss td2" style="left:397.8px;top:511.80px;width:95.6px">设置波长</div>
<div class="a" style="left:239px;top:536.04px;width:369.9px;height:1px;background:#a8a8a8"></div>
<div class="t mono td" style="left:239.0px;top:525.07px;width:95.4px;color:#2e2e2e;letter-spacing:0.88px;text-indent:0.88px">SetInDis</div>
<div class="t mono td" style="left:334.4px;top:525.07px;width:63.4px">1</div>
<div class="t ss td2" style="left:397.8px;top:524.87px;width:95.6px">设置入口</div>
<div class="a" style="left:239px;top:549.11px;width:369.9px;height:1px;background:#a8a8a8"></div>
<div class="t mono td" style="left:239.0px;top:538.14px;width:95.4px;color:#2e2e2e;letter-spacing:0.56px;text-indent:0.56px">SetOutDis</div>
<div class="t mono td" style="left:334.4px;top:538.14px;width:63.4px">2</div>
<div class="t ss td2" style="left:397.8px;top:537.94px;width:95.6px">设置出口</div>
<div class="a" style="left:239px;top:562.18px;width:369.9px;height:1px;background:#a8a8a8"></div>
<div class="t mono td" style="left:239.0px;top:551.21px;width:95.4px;color:#2e2e2e;letter-spacing:0.93px;text-indent:0.93px">SetGrating</div>
<div class="t mono td" style="left:334.4px;top:551.21px;width:63.4px">3</div>
<div class="t ss td2" style="left:397.8px;top:551.01px;width:95.6px">设置光栅</div>
<div class="a" style="left:239px;top:575.25px;width:369.9px;height:1px;background:#a8a8a8"></div>
<div class="t mono td" style="left:239.0px;top:564.28px;width:95.4px;color:#2e2e2e;letter-spacing:1.07px;text-indent:1.07px">SetSlitLen</div>
<div class="t mono td" style="left:334.4px;top:564.28px;width:63.4px">4</div>
<div class="t ss td2" style="left:397.8px;top:564.08px;width:95.6px">设置狭缝</div>
<div class="a" style="left:239px;top:588.32px;width:369.9px;height:1px;background:#a8a8a8"></div>
<div class="t mono td" style="left:239.0px;top:577.35px;width:95.4px;color:#2e2e2e;letter-spacing:1.56px;text-indent:1.56px">SetFilter</div>
<div class="t mono td" style="left:334.4px;top:577.35px;width:63.4px">5</div>
<div class="t ss td2" style="left:397.8px;top:577.15px;width:95.6px">设置滤光片</div>
<div class="a" style="left:239px;top:601.39px;width:369.9px;height:1px;background:#a8a8a8"></div>
<div class="t mono td" style="left:239.0px;top:590.42px;width:95.4px;color:#2e2e2e;letter-spacing:-0.24px;text-indent:-0.24px">GetWave</div>
<div class="t mono td" style="left:334.4px;top:590.42px;width:63.4px">6</div>
<div class="t ss td2" style="left:397.8px;top:590.22px;width:95.6px">获取波长</div>
<div class="a" style="left:239px;top:614.46px;width:369.9px;height:1px;background:#a8a8a8"></div>
<div class="t mono td" style="left:239.0px;top:603.49px;width:95.4px;color:#2e2e2e;letter-spacing:0.62px;text-indent:0.62px">GetInDis</div>
<div class="t mono td" style="left:334.4px;top:603.49px;width:63.4px">7</div>
<div class="t ss td2" style="left:397.8px;top:603.29px;width:95.6px">获取入口</div>
<div class="a" style="left:239px;top:627.53px;width:369.9px;height:1px;background:#a8a8a8"></div>
<div class="t mono td" style="left:239.0px;top:616.56px;width:95.4px;color:#2e2e2e;letter-spacing:0.33px;text-indent:0.33px">GetOutDis</div>
<div class="t mono td" style="left:334.4px;top:616.56px;width:63.4px">8</div>
<div class="t ss td2" style="left:397.8px;top:616.36px;width:95.6px">获取出口</div>
<div class="a" style="left:239px;top:640.60px;width:369.9px;height:1px;background:#a8a8a8"></div>
<div class="t mono td" style="left:239.0px;top:629.63px;width:95.4px;color:#2e2e2e;letter-spacing:0.72px;text-indent:0.72px">GetGrating</div>
<div class="t mono td" style="left:334.4px;top:629.63px;width:63.4px">9</div>
<div class="t ss td2" style="left:397.8px;top:629.43px;width:95.6px">获取光栅</div>
<div class="a" style="left:239px;top:653.67px;width:369.9px;height:1px;background:#a8a8a8"></div>
<div class="t mono td" style="left:239.0px;top:642.70px;width:95.4px;color:#2e2e2e;letter-spacing:0.86px;text-indent:0.86px">GetSlitLen</div>
<div class="t mono td" style="left:334.4px;top:642.70px;width:63.4px">10</div>
<div class="t ss td2" style="left:397.8px;top:642.50px;width:95.6px">获取狭缝</div>
<div class="a" style="left:239px;top:666.74px;width:369.9px;height:1px;background:#a8a8a8"></div>
<div class="t mono td" style="left:239.0px;top:655.77px;width:95.4px;color:#2e2e2e;letter-spacing:1.33px;text-indent:1.33px">GetFilter</div>
<div class="t mono td" style="left:334.4px;top:655.77px;width:63.4px">11</div>
<div class="t ss td2" style="left:397.8px;top:655.57px;width:95.6px">获取滤光片</div>
<div class="a" style="left:239px;top:679.81px;width:369.9px;height:1px;background:#a8a8a8"></div>
<div class="t mono td" style="left:239.0px;top:668.84px;width:95.4px;color:#2e2e2e;letter-spacing:-0.90px;text-indent:-0.90px">R PERIPHERAL</div>
<div class="t mono td" style="left:334.4px;top:668.84px;width:63.4px">12</div>
<div class="t ss td2" style="left:397.8px;top:668.64px;width:95.6px">获取系统参数</div>
<div class="a" style="left:239px;top:692.88px;width:369.9px;height:1px;background:#a8a8a8"></div>
<div class="t mono td" style="left:239.0px;top:681.91px;width:95.4px;color:#2e2e2e;letter-spacing:-1.36px;text-indent:-1.36px">GRATINGS</div>
<div class="t mono td" style="left:334.4px;top:681.91px;width:63.4px">13</div>
<div class="a" style="left:333.9px;top:510.4px;width:1px;height:183.0px;background:#a8a8a8"></div>
<div class="a" style="left:397.3px;top:510.4px;width:1px;height:183.0px;background:#a8a8a8"></div>
<div class="a" style="left:492.9px;top:510.4px;width:1px;height:183.0px;background:#a8a8a8"></div>
<div class="a" style="left:607.9px;top:510.4px;width:1px;height:183.0px;background:#a8a8a8"></div>
</div></div>
<div class="a" style="left:0;top:3px;width:3px;height:834px;background:#e6ebf2"></div>
</body></html>
